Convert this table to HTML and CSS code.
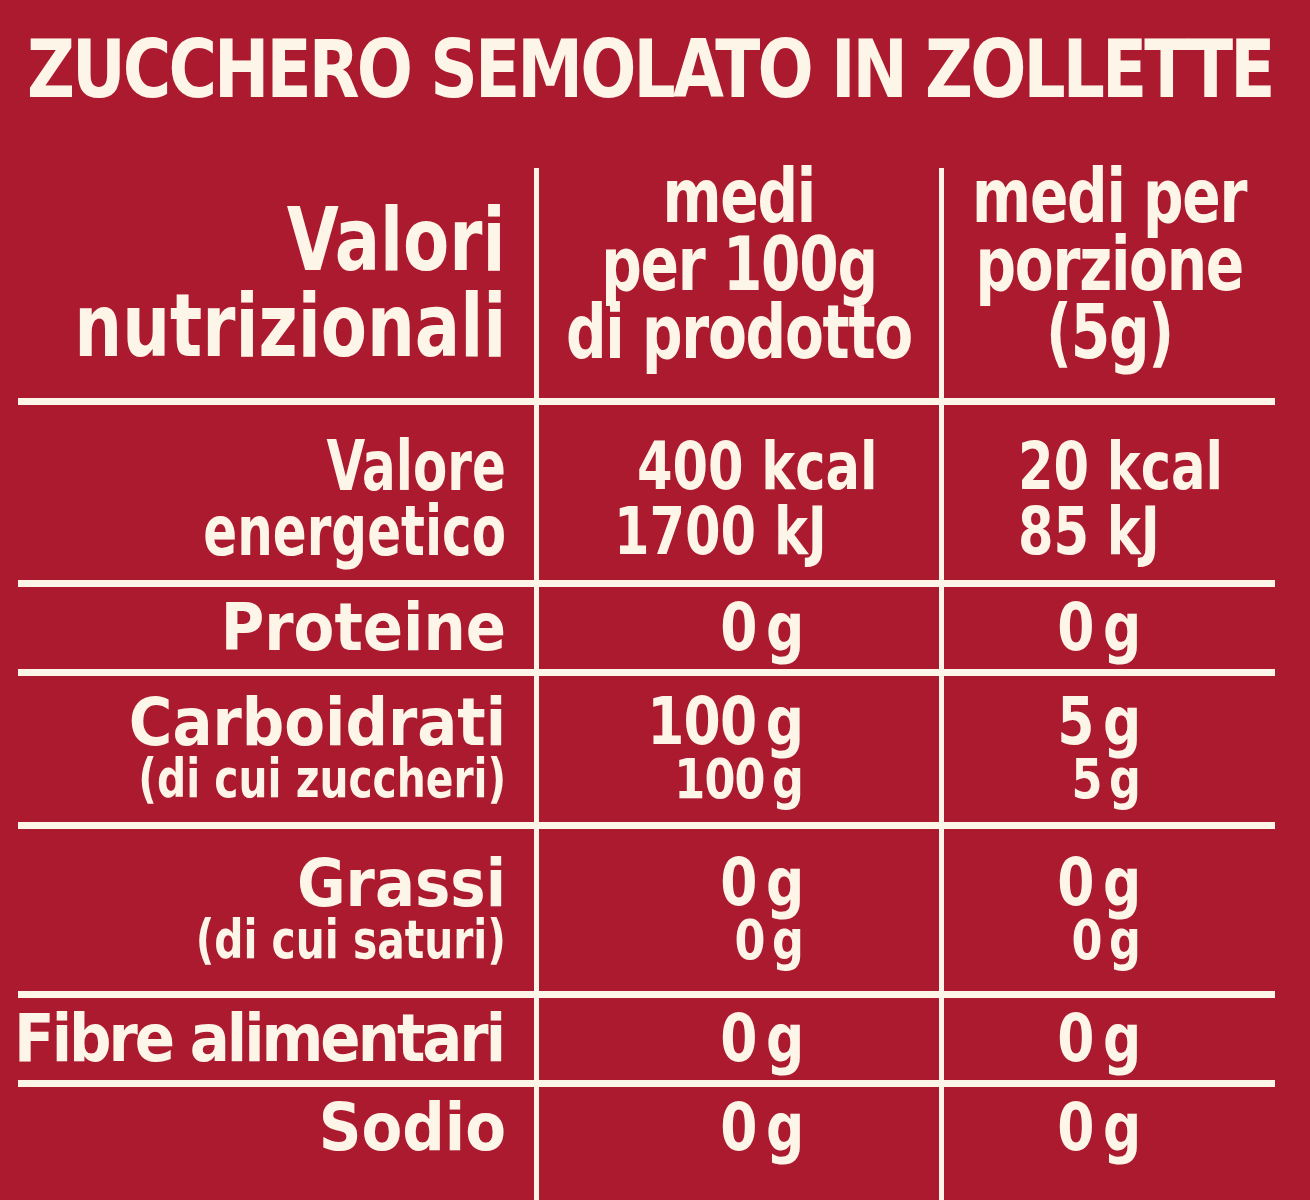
FILE: index.html
```html
<!DOCTYPE html>
<html lang="it">
<head>
<meta charset="utf-8">
<title>Zucchero semolato in zollette</title>
<link rel="stylesheet" href="styles.css">
</head>
<body>
<div class="sheet">
  <h1 class="title"><span>ZUCCHERO SEMOLATO IN ZOLLETTE</span></h1>
  <div class="table">
    <div class="row head">
      <div class="cell c1"><span class="hl">Valori</span><span class="hl">nutrizionali</span></div>
      <div class="cell c2"><span class="hs first">medi</span><span class="hs">per 100g</span><span class="hs">di prodotto</span></div>
      <div class="cell c3"><span class="hs first">medi per</span><span class="hs">porzione</span><span class="hs">(5g)</span></div>
    </div>
    <div class="row energy">
      <div class="cell c1"><span class="el">Valore</span><span class="el">energetico</span></div>
      <div class="cell c2 left"><span class="ev indent">400 kcal</span><span class="ev">1700 kJ</span></div>
      <div class="cell c3 left"><span class="ev">20 kcal</span><span class="ev">85 kJ</span></div>
    </div>
    <div class="row single">
      <div class="cell c1"><span class="lab">Proteine</span></div>
      <div class="cell c2"><span class="val">0 g</span></div>
      <div class="cell c3"><span class="val">0 g</span></div>
    </div>
    <div class="row carbo">
      <div class="cell c1"><span class="lab2">Carboidrati</span><span class="sub">(di cui zuccheri)</span></div>
      <div class="cell c2"><span class="val2">100 g</span><span class="sval">100 g</span></div>
      <div class="cell c3"><span class="val2">5 g</span><span class="sval">5 g</span></div>
    </div>
    <div class="row fat">
      <div class="cell c1"><span class="lab2">Grassi</span><span class="sub">(di cui saturi)</span></div>
      <div class="cell c2"><span class="val2">0 g</span><span class="sval">0 g</span></div>
      <div class="cell c3"><span class="val2">0 g</span><span class="sval">0 g</span></div>
    </div>
    <div class="row single">
      <div class="cell c1"><span class="lab tight">Fibre alimentari</span></div>
      <div class="cell c2"><span class="val">0 g</span></div>
      <div class="cell c3"><span class="val">0 g</span></div>
    </div>
    <div class="row last">
      <div class="cell c1"><span class="lab">Sodio</span></div>
      <div class="cell c2"><span class="val">0 g</span></div>
      <div class="cell c3"><span class="val">0 g</span></div>
    </div>
  </div>
</div>
</body>
</html>
```

FILE: styles.css
```css
html, body {
  margin: 0;
  padding: 0;
  background: #ab1a2f;
}

body {
  width: 1310px;
  height: 1200px;
  overflow: hidden;
  color: #fdf5e8;
  font-family: "DejaVu Sans", sans-serif;
  font-weight: 700;
  font-stretch: condensed;
}

.sheet {
  padding-top: 28px;
}

.title {
  margin: 0 0 0 27px;
  height: 81px;
  font-size: 73.5px;
  line-height: 81px;
  font-weight: 700;
  white-space: nowrap;
}

.title span {
  display: inline-block;
  letter-spacing: -2.9px;
  transform: scaleY(1.1);
  transform-origin: center center;
}

.table {
  margin: 59px 0 0 18px;
  width: 1257px;
}

.row {
  display: grid;
  grid-template-columns: 521px 405px 331px;
  border-bottom: 7px solid #fdf5e8;
}

.row.head { height: 230px; }
.row.energy { height: 175px; }
.row.single { height: 82px; }
.row.carbo { height: 146px; }
.row.fat { height: 162px; }
.row.last { height: 130px; border-bottom: none; }

.cell {
  display: flex;
  flex-direction: column;
  justify-content: center;
  align-items: flex-end;
  white-space: nowrap;
}

.cell span {
  display: block;
  white-space: nowrap;
  transform-origin: right center;
}

.c1 {
  border-right: 5px solid #fdf5e8;
  padding-right: 28px;
}

.c2 {
  border-right: 5px solid #fdf5e8;
  padding-right: 136px;
}

.c3 {
  padding-right: 135px;
}

/* header */
.hl {
  font-size: 88px;
  line-height: 86px;
  transform: scaleX(0.85);
}

.head .c2, .head .c3 {
  justify-content: flex-start;
  align-items: center;
  padding-right: 0;
}

.head .c2 span, .head .c3 span {
  transform-origin: center center;
}

.hs {
  font-size: 75px;
  line-height: 68px;
  letter-spacing: -1.5px;
  transform: scaleX(0.84);
}

.hs.first { margin-top: -6px; }

/* energy */
.energy .cell { padding-top: 12px; }

.el {
  font-size: 69px;
  line-height: 65px;
  transform: scaleX(0.805);
}

.cell.left {
  align-items: flex-start;
  padding-right: 0;
}

.cell.left span { transform-origin: left center; }

.c2.left { padding-left: 75px; }
.c3.left { padding-left: 74px; }

.ev {
  font-size: 66px;
  line-height: 65px;
  transform: scaleX(0.86);
}

.ev.indent { margin-left: 23px; }

/* nutrient rows */
.lab {
  font-size: 66px;
  line-height: 66px;
}

.lab.tight {
  letter-spacing: -3px;
  margin-right: 3px;
}

.lab2 {
  font-size: 66px;
  line-height: 60px;
}

.sub {
  font-size: 53px;
  line-height: 52px;
  transform: scaleX(0.855);
}

.val, .val2, .sval {
  letter-spacing: -1px;
  word-spacing: -9px;
  transform: scaleX(0.9);
}

.val {
  font-size: 66px;
  line-height: 66px;
}

.val2 {
  font-size: 66px;
  line-height: 60px;
}

.sval {
  font-size: 55px;
  line-height: 55px;
  word-spacing: -8px;
}

.last .cell {
  justify-content: flex-start;
  padding-top: 8px;
}
```
